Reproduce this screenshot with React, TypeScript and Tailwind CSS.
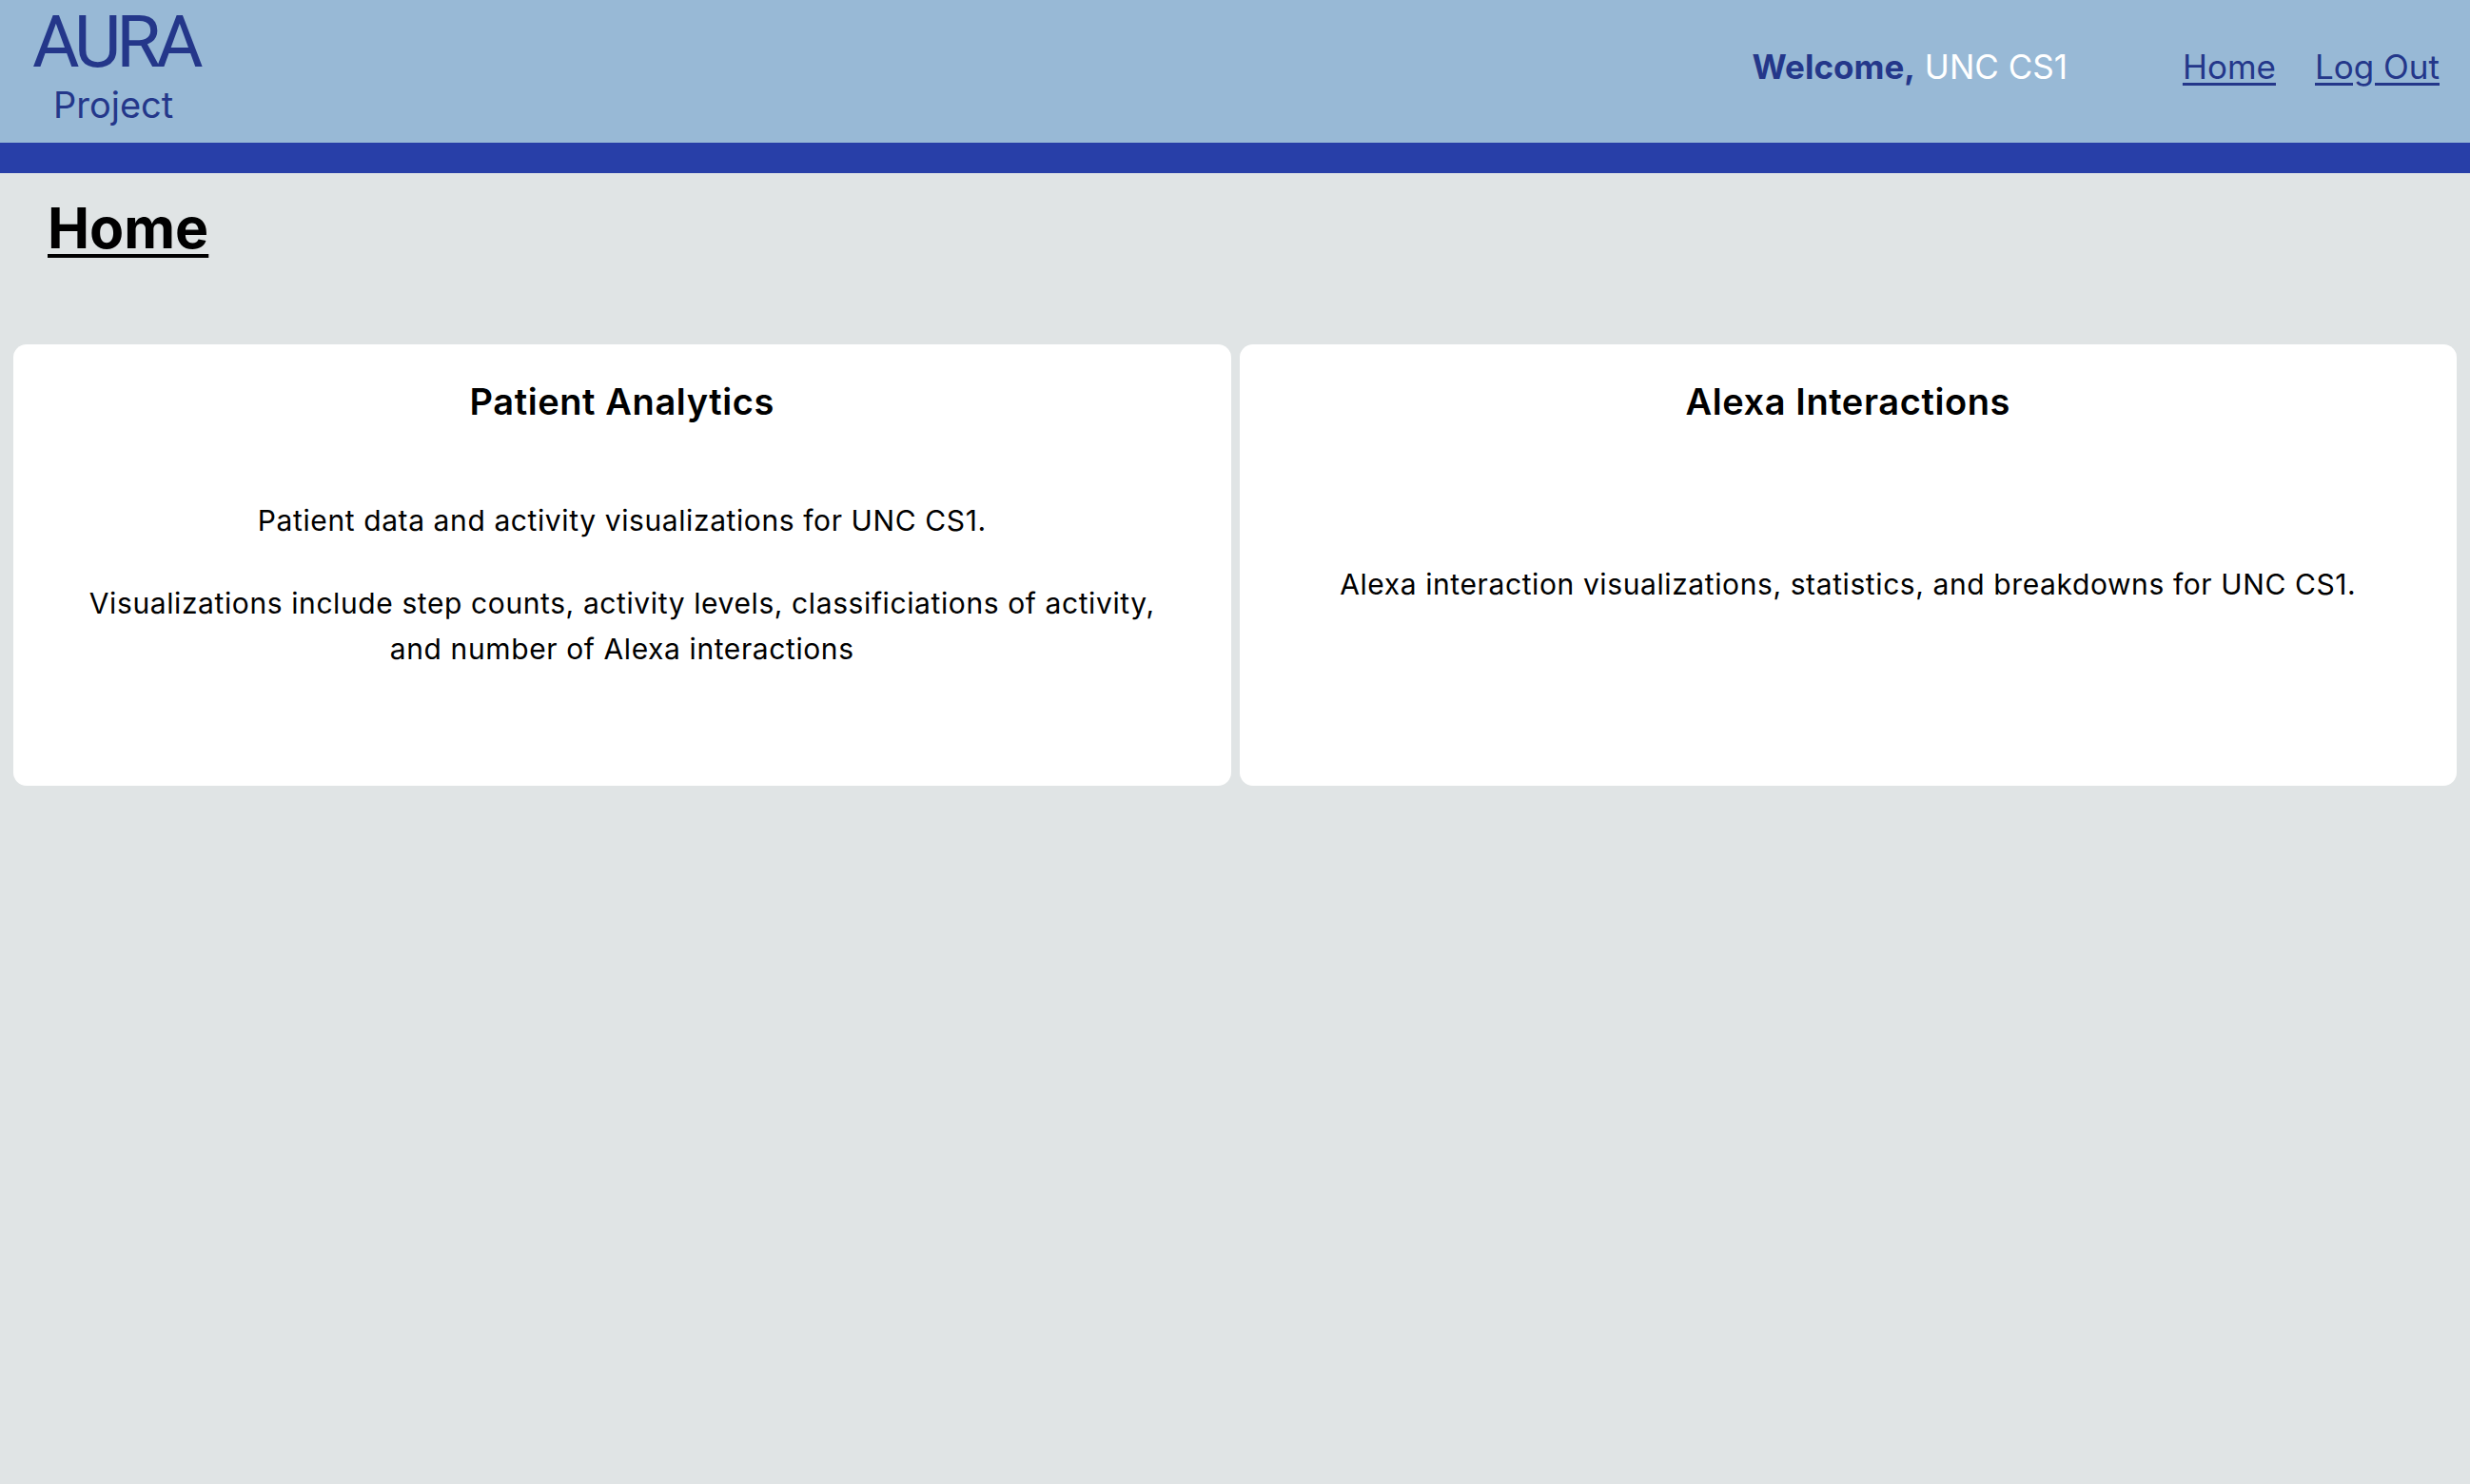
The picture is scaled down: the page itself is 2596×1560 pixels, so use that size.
import React from "react";

export default function App() {
  return (
    <div className="min-h-[1560px] bg-[#e0e4e5] font-['Inter',sans-serif] text-black">
      <header className="h-[150px] bg-[#98b9d6] flex justify-between">
        <div className="flex flex-col items-start pl-[34px] pt-[6px]">
          <div className="font-['Roboto',sans-serif] text-[76px] leading-[76px] tracking-[-5px] text-[#24378a]">AURA</div>
          <div className="pl-[22px] mt-[6px] font-['Inter',sans-serif] text-[38px] leading-[44px] text-[#24378a]">Project</div>
        </div>
        <div className="flex items-start pt-[46px] pr-[32px] text-[35px] leading-[48px]">
          <div>
            <span className="font-bold text-[#24378a]">Welcome,</span>{" "}
            <span className="text-white">UNC CS1</span>
          </div>
          <a href="#" className="ml-[121px] text-[#24378a] underline underline-offset-[4px]">Home</a>
          <a href="#" className="ml-[41px] text-[#24378a] underline underline-offset-[4px]">Log Out</a>
        </div>
      </header>
      <div className="h-[32px] bg-[#283fa8]" />
      <main>
        <h1 className="pl-[50px] pt-[22px] text-[59px] leading-[72px] font-bold underline decoration-[4px] underline-offset-[6px]">Home</h1>
        <div className="grid grid-cols-2 gap-[9px] px-[14px] mt-[86px]">
          <div className="bg-white rounded-[14px] h-[464px] flex flex-col items-center pt-[36px] px-[60px] text-center">
            <h2 className="text-[38px] leading-[48px] font-semibold tracking-[0.6px]">Patient Analytics</h2>
            <p className="mt-[77px] text-[30px] leading-[48px] tracking-[0.6px]">Patient data and activity visualizations for UNC CS1.</p>
            <p className="mt-[39px] text-[30px] leading-[48px] tracking-[0.6px]">Visualizations include step counts, activity levels, classificiations of activity, and number of Alexa interactions</p>
          </div>
          <div className="bg-white rounded-[14px] h-[464px] flex flex-col items-center pt-[36px] px-[60px] text-center">
            <h2 className="text-[38px] leading-[48px] font-semibold tracking-[0.6px]">Alexa Interactions</h2>
            <p className="mt-[144px] text-[30px] leading-[48px] tracking-[0.6px]">Alexa interaction visualizations, statistics, and breakdowns for UNC CS1.</p>
          </div>
        </div>
      </main>
    </div>
  );
}
